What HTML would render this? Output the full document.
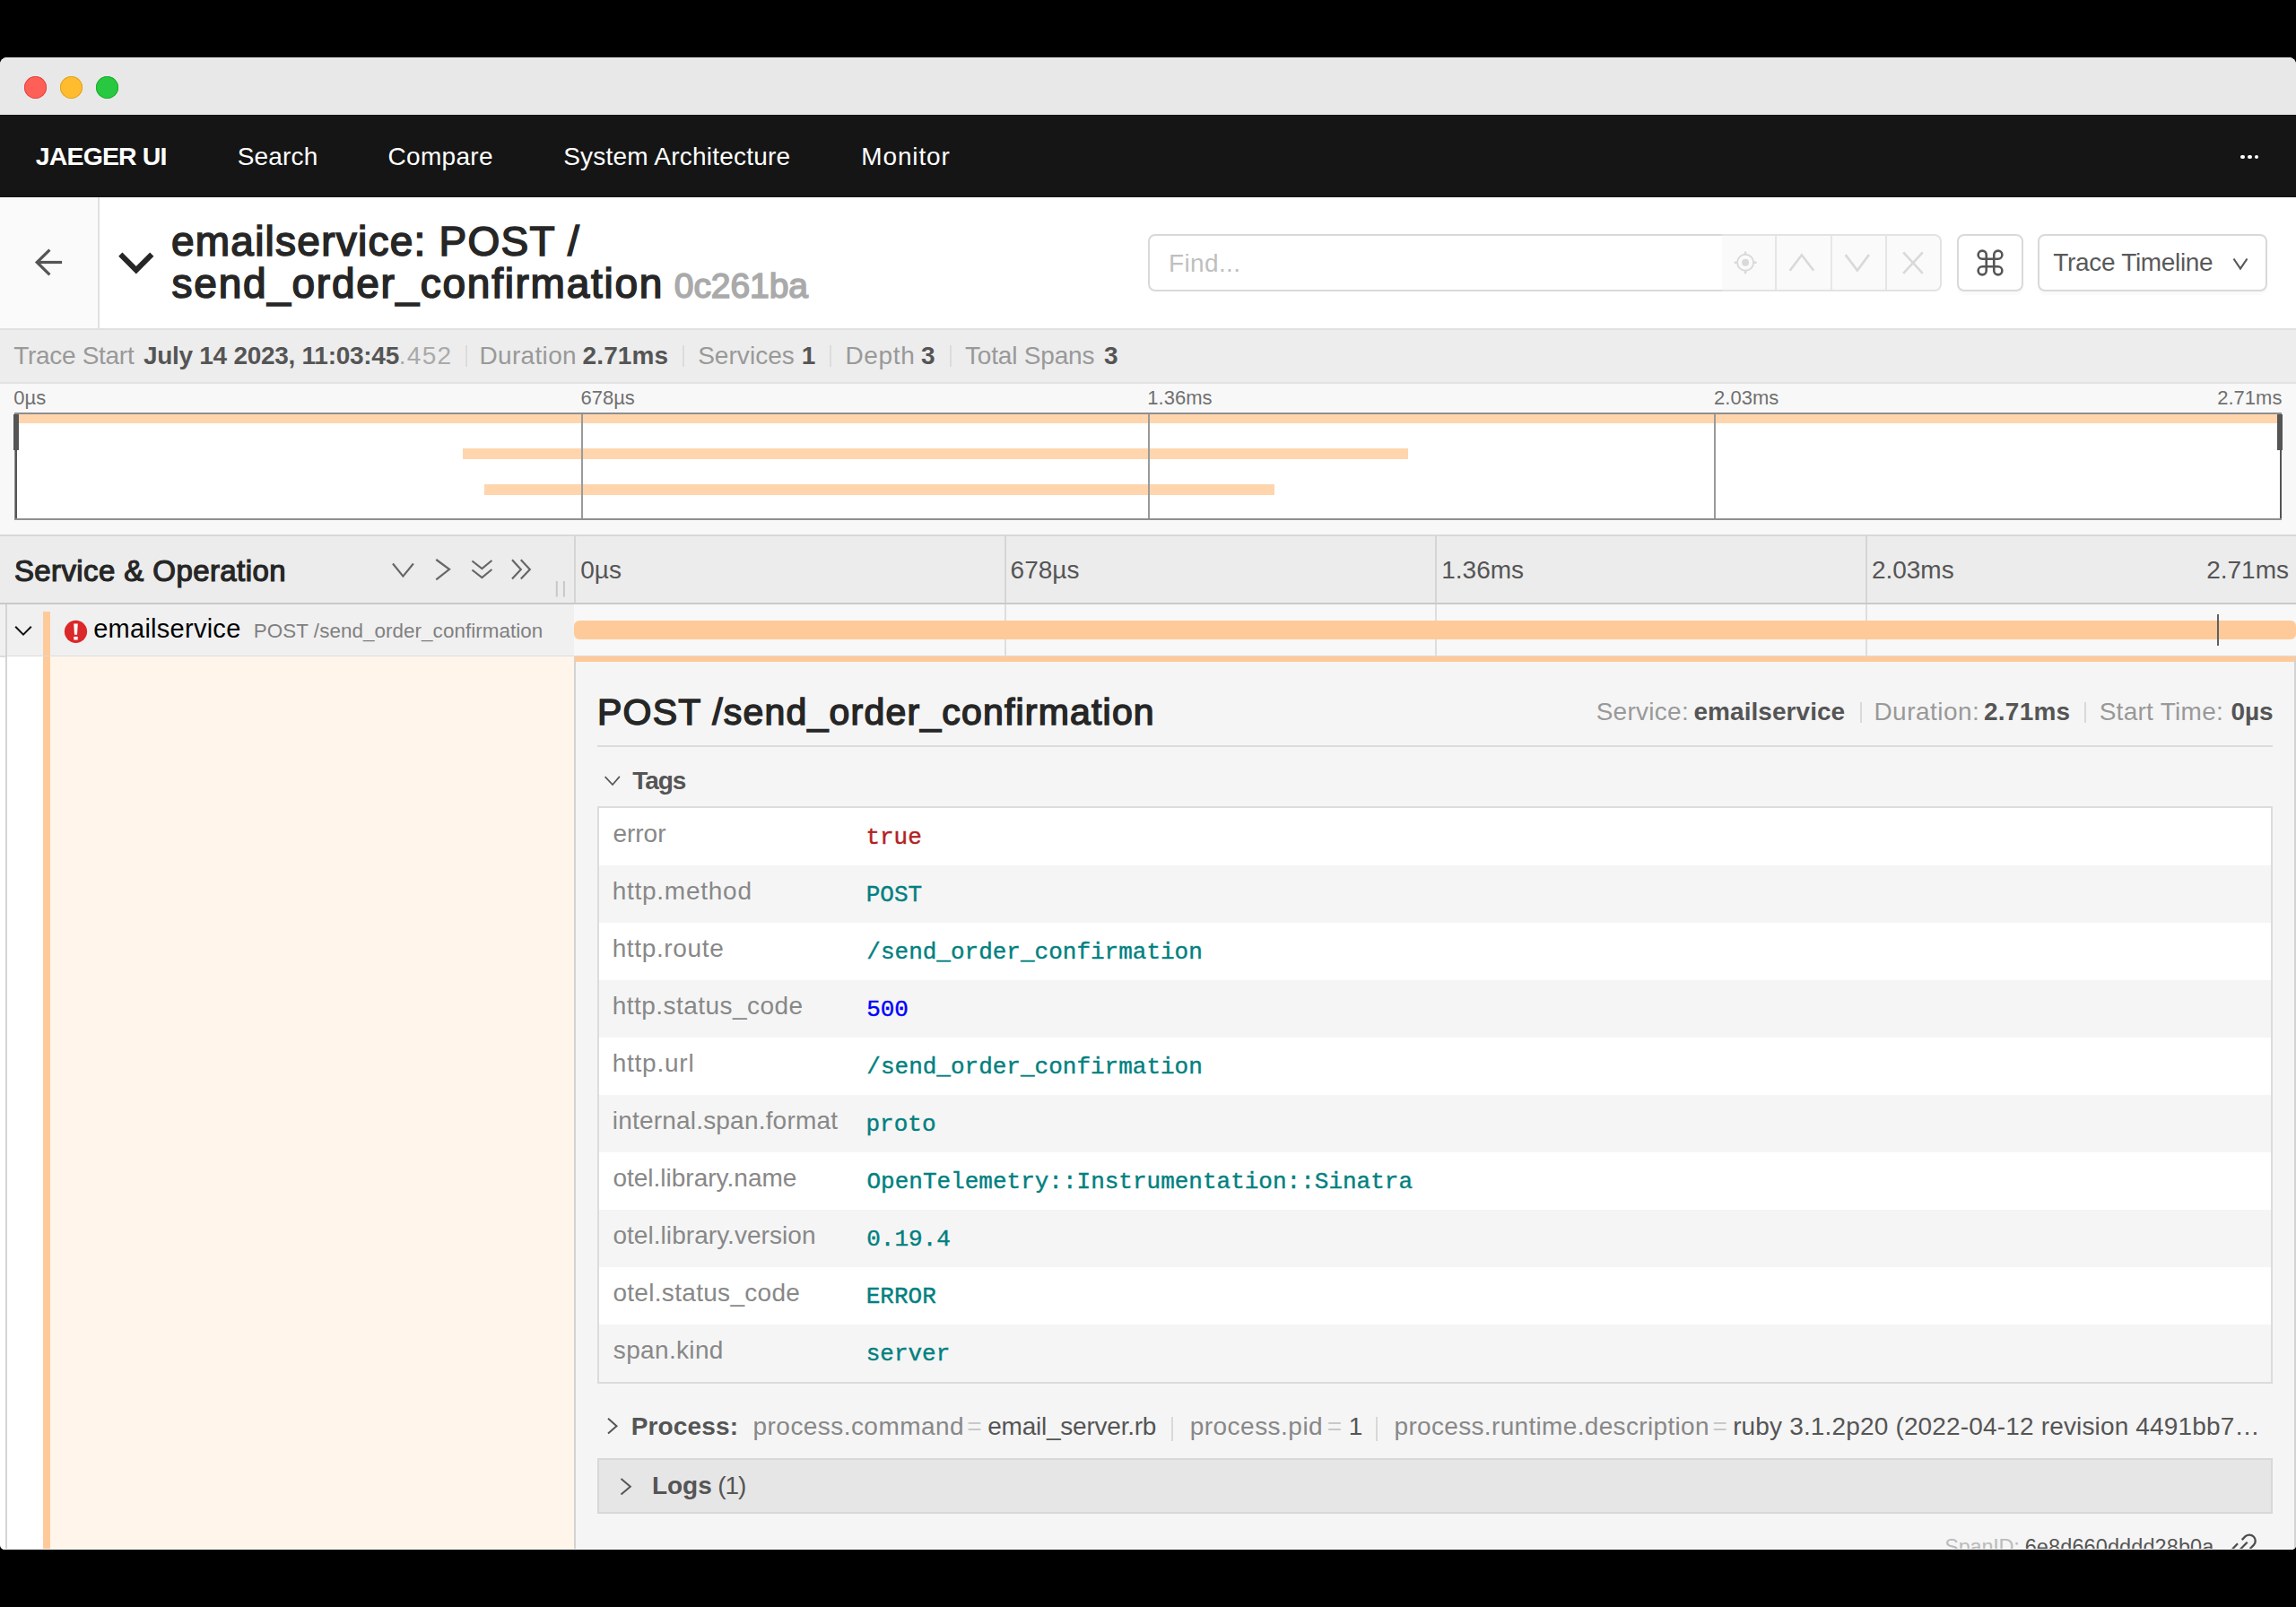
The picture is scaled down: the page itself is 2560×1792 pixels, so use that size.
<!DOCTYPE html>
<html><head><meta charset="utf-8">
<style>
*{box-sizing:border-box;margin:0;padding:0}
html,body{width:2560px;height:1792px;overflow:hidden;background:#000;font-family:"Liberation Sans",sans-serif}
.a{position:absolute}
.t{position:absolute;white-space:nowrap;line-height:1}
#win{position:absolute;left:0;top:64px;width:2560px;height:1664px;background:#fff;border-radius:8px 8px 5px 5px;overflow:hidden}
#pg{position:absolute;left:0;top:-64px;width:2560px;height:1792px}
</style></head><body>
<div id="win"><div id="pg">
<div class="a" style="left:0px;top:64px;width:2560px;height:64px;background:#e8e8e8;"></div>
<div class="a" style="left:27.1px;top:85.3px;width:25px;height:25px;border-radius:50%;background:#fe5f57;box-shadow:inset 0 0 0 1px #e14640"></div>
<div class="a" style="left:67.1px;top:85.3px;width:25px;height:25px;border-radius:50%;background:#febc2e;box-shadow:inset 0 0 0 1px #dfa123"></div>
<div class="a" style="left:107.1px;top:85.3px;width:25px;height:25px;border-radius:50%;background:#28c840;box-shadow:inset 0 0 0 1px #1aad2c"></div>
<div class="a" style="left:0px;top:128px;width:2560px;height:92px;background:#151515;"></div>
<div class="t" style="top:160.07px;font-size:28.5px;color:#fff;font-family:'Liberation Sans',sans-serif;font-weight:bold;letter-spacing:-0.86px;left:39.77px;">JAEGER UI</div>
<div class="t" style="top:160.70px;font-size:28px;color:#fff;font-family:'Liberation Sans',sans-serif;letter-spacing:0.155px;left:264.73px;">Search</div>
<div class="t" style="top:160.70px;font-size:28px;color:#fff;font-family:'Liberation Sans',sans-serif;letter-spacing:0.301px;left:432.58px;">Compare</div>
<div class="t" style="top:160.70px;font-size:28px;color:#fff;font-family:'Liberation Sans',sans-serif;letter-spacing:0.222px;left:628.13px;">System Architecture</div>
<div class="t" style="top:160.70px;font-size:28px;color:#fff;font-family:'Liberation Sans',sans-serif;letter-spacing:0.866px;left:960.30px;">Monitor</div>
<div class="a" style="left:2498.35px;top:172.75px;width:4.5px;height:4.5px;border-radius:50%;background:#fff"></div>
<div class="a" style="left:2506.15px;top:172.75px;width:4.5px;height:4.5px;border-radius:50%;background:#fff"></div>
<div class="a" style="left:2513.95px;top:172.75px;width:4.5px;height:4.5px;border-radius:50%;background:#fff"></div>
<div class="a" style="left:0px;top:220px;width:2560px;height:146px;background:#fff;"></div>
<div class="a" style="left:0px;top:220px;width:109px;height:146px;background:#fafafa;"></div>
<div class="a" style="left:109px;top:220px;width:2px;height:146px;background:#e0e0e0;"></div>
<div class="a" style="left:0px;top:366px;width:2560px;height:2px;background:#e0e0e0;"></div>
<svg class="a" style="left:0;top:220px" width="110" height="146" viewBox="0 220 110 146"><g fill="none" stroke="#555" stroke-width="3.2" stroke-linecap="butt"><path d="M55.4 278.7 L41.2 292.5 L55.4 306.3"/><path d="M41.5 292.5 H69.1"/></g></svg>
<svg class="a" style="left:120px;top:270px" width="64" height="50" viewBox="120 270 64 50"><path d="M134.3 283.7 L151.8 301.2 L169.3 283.7" fill="none" stroke="#262626" stroke-width="6"/></svg>
<div class="t" style="top:245.86px;font-size:46px;color:#262626;font-family:'Liberation Sans',sans-serif;letter-spacing:1.245px;left:190.95px;-webkit-text-stroke:1.6px #262626;">emailservice: POST /</div>
<div class="t" style="top:293.26px;font-size:46px;color:#262626;font-family:'Liberation Sans',sans-serif;letter-spacing:1.719px;left:191.62px;-webkit-text-stroke:1.6px #262626;">send_order_confirmation</div>
<div class="t" style="top:299.29px;font-size:39px;color:#aaaaaa;font-family:'Liberation Sans',sans-serif;letter-spacing:-0.069px;left:751.78px;-webkit-text-stroke:1.6px #aaaaaa;">0c261ba</div>
<div class="a" style="left:1280px;top:261px;width:642px;height:64px;background:#fff;border:2px solid #d9d9d9;border-radius:8px 0 0 8px"></div>
<div class="t" style="top:280.10px;font-size:28px;color:#bfbfbf;font-family:'Liberation Sans',sans-serif;letter-spacing:0.374px;left:1303.00px;">Find...</div>
<div class="a" style="left:1920px;top:261px;width:245px;height:64px;background:#fafafa;border:2px solid #e3e3e3;border-left:none;border-radius:0 8px 8px 0"></div>
<div class="a" style="left:1978.5px;top:263px;width:2px;height:60px;background:#e6e6e6;"></div>
<div class="a" style="left:2040.5px;top:263px;width:2px;height:60px;background:#e6e6e6;"></div>
<div class="a" style="left:2102px;top:263px;width:2px;height:60px;background:#e6e6e6;"></div>
<svg class="a" style="left:1920px;top:261px" width="245" height="64" viewBox="1920 261 245 64">
<g fill="none" stroke="#d9d9d9" stroke-width="1.9">
<circle cx="1946.1" cy="292.8" r="9"/>
</g>
<path d="M1946.1 280.4 V284 M1946.1 301.6 V305.2 M1933.7 292.8 H1937.3 M1954.9 292.8 H1958.5" stroke="#d9d9d9" stroke-width="2.5"/>
<circle cx="1946.1" cy="292.8" r="4" fill="#d9d9d9"/>
<g fill="none" stroke="#d9d9d9" stroke-width="2.6">
<path d="M1995.7 301.8 L2008.9 284.3 L2022.2 301.8"/>
<path d="M2057.7 284.1 L2070.9 301.6 L2083.9 284.1"/>
<path d="M2122.2 281.4 L2143.8 304.8 M2143.8 281.4 L2122.2 304.8"/>
</g></svg>
<div class="a" style="left:2182px;top:261px;width:74px;height:64px;background:#fff;border:2px solid #d9d9d9;border-radius:8px;box-shadow:0 4px 0 rgba(0,0,0,0.015)"></div>
<svg class="a" style="left:2190px;top:265px" width="60" height="56" viewBox="2190 265 60 56"><path d="M2214.75 284.2 V301.8 M2223.25 284.2 V301.8 M2210.2 288.75 H2227.8 M2210.2 297.25 H2227.8 M2214.75 284.2 A4.55 4.55 0 1 0 2210.2 288.75 M2223.25 284.2 A4.55 4.55 0 1 1 2227.8 288.75 M2214.75 301.8 A4.55 4.55 0 1 1 2210.2 297.25 M2223.25 301.8 A4.55 4.55 0 1 0 2227.8 297.25" fill="none" stroke="#555" stroke-width="2.6"/></svg>
<div class="a" style="left:2272px;top:261px;width:256px;height:64px;background:#fff;border:2px solid #d9d9d9;border-radius:8px;box-shadow:0 4px 0 rgba(0,0,0,0.015)"></div>
<div class="t" style="top:279.30px;font-size:28px;color:#595959;font-family:'Liberation Sans',sans-serif;letter-spacing:-0.33px;left:2289.37px;">Trace Timeline</div>
<svg class="a" style="left:2480px;top:280px" width="40" height="30" viewBox="2480 280 40 30"><path d="M2490.5 288.5 L2498 299.5 L2505.5 288.5" fill="none" stroke="#595959" stroke-width="2.2"/></svg>
<div class="a" style="left:0px;top:368px;width:2560px;height:58px;background:#ededed;"></div>
<div class="a" style="left:0px;top:426px;width:2560px;height:2px;background:#e3e3e3;"></div>
<div class="t" style="top:383.10px;font-size:28px;color:#999;font-family:'Liberation Sans',sans-serif;letter-spacing:-0.305px;left:15.27px;">Trace Start</div>
<div class="t" style="top:383.10px;font-size:28px;color:#555;font-family:'Liberation Sans',sans-serif;font-weight:bold;letter-spacing:-0.274px;left:159.88px;">July 14 2023, 11:03:45</div>
<div class="t" style="top:383.10px;font-size:28px;color:#aaa;font-family:'Liberation Sans',sans-serif;letter-spacing:1.256px;left:444.84px;">.452</div>
<div class="t" style="top:383.10px;font-size:28px;color:#999;font-family:'Liberation Sans',sans-serif;letter-spacing:0.326px;left:534.50px;">Duration</div>
<div class="t" style="top:383.10px;font-size:28px;color:#555;font-family:'Liberation Sans',sans-serif;font-weight:bold;letter-spacing:0.131px;left:649.53px;">2.71ms</div>
<div class="t" style="top:383.10px;font-size:28px;color:#999;font-family:'Liberation Sans',sans-serif;letter-spacing:0.045px;left:778.13px;">Services</div>
<div class="t" style="top:383.10px;font-size:28px;color:#555;font-family:'Liberation Sans',sans-serif;font-weight:bold;left:893.64px;">1</div>
<div class="t" style="top:383.10px;font-size:28px;color:#999;font-family:'Liberation Sans',sans-serif;letter-spacing:0.675px;left:942.40px;">Depth</div>
<div class="t" style="top:383.10px;font-size:28px;color:#555;font-family:'Liberation Sans',sans-serif;font-weight:bold;left:1026.96px;">3</div>
<div class="t" style="top:383.10px;font-size:28px;color:#999;font-family:'Liberation Sans',sans-serif;letter-spacing:-0.188px;left:1075.97px;">Total Spans</div>
<div class="t" style="top:383.10px;font-size:28px;color:#555;font-family:'Liberation Sans',sans-serif;font-weight:bold;left:1230.96px;">3</div>
<div class="a" style="left:518.5px;top:385px;width:2px;height:24px;background:#dcdcdc;"></div>
<div class="a" style="left:761px;top:385px;width:2px;height:24px;background:#dcdcdc;"></div>
<div class="a" style="left:925px;top:385px;width:2px;height:24px;background:#dcdcdc;"></div>
<div class="a" style="left:1059px;top:385px;width:2px;height:24px;background:#dcdcdc;"></div>
<div class="a" style="left:0px;top:428px;width:2560px;height:168px;background:#f8f8f8;"></div>
<div class="a" style="left:0px;top:596px;width:2560px;height:2px;background:#d8d8d8;"></div>
<div class="t" style="top:433.38px;font-size:22px;color:#707070;font-family:'Liberation Sans',sans-serif;left:15.34px;">0µs</div>
<div class="t" style="top:433.38px;font-size:22px;color:#707070;font-family:'Liberation Sans',sans-serif;left:647.48px;">678µs</div>
<div class="t" style="top:433.38px;font-size:22px;color:#707070;font-family:'Liberation Sans',sans-serif;left:1279.32px;">1.36ms</div>
<div class="t" style="top:433.38px;font-size:22px;color:#707070;font-family:'Liberation Sans',sans-serif;left:1911.09px;">2.03ms</div>
<div class="t" style="top:433.38px;font-size:22px;color:#707070;font-family:'Liberation Sans',sans-serif;right:15.61px;">2.71ms</div>
<div class="a" style="left:16px;top:460px;width:2528px;height:120px;background:#fff;border:2px solid #8f8f8f"></div>
<div class="a" style="left:18px;top:462px;width:2524px;height:10px;background:#ffd5ad;"></div>
<div class="a" style="left:515.5px;top:500px;width:1054.5px;height:12px;background:#ffd5ad;"></div>
<div class="a" style="left:540px;top:540px;width:881px;height:12px;background:#ffd5ad;"></div>
<div class="a" style="left:648px;top:462px;width:2px;height:116px;background:#9a9a9a;"></div>
<div class="a" style="left:1279.5px;top:462px;width:2px;height:116px;background:#9a9a9a;"></div>
<div class="a" style="left:1911px;top:462px;width:2px;height:116px;background:#9a9a9a;"></div>
<div class="a" style="left:15px;top:462px;width:6px;height:40px;background:#555;"></div>
<div class="a" style="left:16.5px;top:502px;width:2px;height:76px;background:#555;"></div>
<div class="a" style="left:2539px;top:462px;width:6px;height:40px;background:#555;"></div>
<div class="a" style="left:2542px;top:502px;width:2px;height:76px;background:#555;"></div>
<div class="a" style="left:0px;top:598px;width:2560px;height:74px;background:#ececec;"></div>
<div class="a" style="left:0px;top:672px;width:2560px;height:2px;background:#c9c9c9;"></div>
<div class="t" style="top:619.57px;font-size:33px;color:#262626;font-family:'Liberation Sans',sans-serif;letter-spacing:0.407px;left:15.90px;-webkit-text-stroke:1.2px #262626;">Service &amp; Operation</div>
<svg class="a" style="left:420px;top:610px" width="220" height="62" viewBox="420 610 220 62">
<g fill="none" stroke="#666" stroke-width="2.2">
<path d="M438 628.5 L449.4 642.6 L460.9 628.5"/>
<path d="M486.3 624 L501 634.8 L486.3 646.3"/>
<path d="M526.4 625.5 L537.4 634 L548.4 625 M526.4 635.5 L537.4 644 L548.4 635"/>
<path d="M571 624.2 L580.8 635 L571 645.6 M580.8 624.2 L590.8 635 L580.8 645.6"/>
</g>
<path d="M620.8 648 V665.6 M628.9 648 V665.6" stroke="#c8c8c8" stroke-width="2"/>
</svg>
<div class="a" style="left:640px;top:598px;width:2px;height:74px;background:#d5d5d5;"></div>
<div class="a" style="left:1120px;top:598px;width:2px;height:74px;background:#d5d5d5;"></div>
<div class="a" style="left:1600px;top:598px;width:2px;height:74px;background:#d5d5d5;"></div>
<div class="a" style="left:2080px;top:598px;width:2px;height:74px;background:#d5d5d5;"></div>
<div class="t" style="top:622.30px;font-size:28px;color:#555;font-family:'Liberation Sans',sans-serif;left:647.21px;">0µs</div>
<div class="t" style="top:622.30px;font-size:28px;color:#555;font-family:'Liberation Sans',sans-serif;left:1126.58px;">678µs</div>
<div class="t" style="top:622.30px;font-size:28px;color:#555;font-family:'Liberation Sans',sans-serif;left:1607.27px;">1.36ms</div>
<div class="t" style="top:622.30px;font-size:28px;color:#555;font-family:'Liberation Sans',sans-serif;left:2086.89px;">2.03ms</div>
<div class="t" style="top:622.30px;font-size:28px;color:#555;font-family:'Liberation Sans',sans-serif;right:7.99px;">2.71ms</div>
<div class="a" style="left:0px;top:674px;width:640px;height:57px;background:#f0f0f0;"></div>
<div class="a" style="left:640px;top:674px;width:1920px;height:57px;background:#f8f8f8;"></div>
<div class="a" style="left:1120px;top:674px;width:2px;height:57px;background:#dedede;"></div>
<div class="a" style="left:1600px;top:674px;width:2px;height:57px;background:#dedede;"></div>
<div class="a" style="left:2080px;top:674px;width:2px;height:57px;background:#dedede;"></div>
<div class="a" style="left:0px;top:731px;width:640px;height:1.5px;background:#dcdcdc;"></div>
<div class="a" style="left:640px;top:731px;width:1920px;height:1.5px;background:#dcdcdc;"></div>
<svg class="a" style="left:10px;top:690px" width="30" height="26" viewBox="10 690 30 26"><path d="M17.2 698.8 L26 707.6 L34.8 698.8" fill="none" stroke="#111" stroke-width="2"/></svg>
<div class="a" style="left:48px;top:682px;width:8px;height:49px;background:#ffca99;"></div>
<svg class="a" style="left:70px;top:690px" width="30" height="30" viewBox="70 690 30 30">
<circle cx="84.5" cy="704.3" r="12.6" fill="#db2828"/>
<path d="M82.2 695.6 H86.8 L86 707.8 H83 Z" fill="#fff"/>
<rect x="82.3" y="709.9" width="4.4" height="3.6" fill="#fff"/>
</svg>
<div class="t" style="top:687.45px;font-size:29px;color:#000;font-family:'Liberation Sans',sans-serif;letter-spacing:0.269px;left:104.17px;">emailservice</div>
<div class="t" style="top:693.04px;font-size:22.4px;color:#808080;font-family:'Liberation Sans',sans-serif;letter-spacing:0.067px;left:282.76px;">POST /send_order_confirmation</div>
<div class="a" style="left:640px;top:692px;width:1920px;height:21px;background:#ffca99;border-radius:6px"></div>
<div class="a" style="left:2472.2px;top:685px;width:2px;height:35px;background:#606060;"></div>
<div class="a" style="left:8px;top:732px;width:40px;height:1000px;background:#fff;"></div>
<div class="a" style="left:56px;top:732px;width:584px;height:1000px;background:#fff5eb;"></div>
<div class="a" style="left:48px;top:732px;width:8px;height:1000px;background:#ffca99;"></div>
<div class="a" style="left:6px;top:674px;width:2px;height:1100px;background:#d5d5d5;"></div>
<div class="a" style="left:640px;top:732px;width:1920px;height:1100px;background:#f5f5f5;border-left:2px solid #d3d3d3;border-right:2px solid #d3d3d3;border-top:6px solid #ffca99"></div>
<div class="t" style="top:773.59px;font-size:41px;color:#262626;font-family:'Liberation Sans',sans-serif;letter-spacing:1.194px;left:666.04px;-webkit-text-stroke:1.5px #262626;">POST /send_order_confirmation</div>
<div class="t" style="top:779.80px;font-size:28px;color:#999;font-family:'Liberation Sans',sans-serif;letter-spacing:0.283px;left:1779.63px;">Service:</div>
<div class="t" style="top:779.80px;font-size:28px;color:#555;font-family:'Liberation Sans',sans-serif;font-weight:bold;letter-spacing:0.047px;left:1888.51px;">emailservice</div>
<div class="a" style="left:2073.5px;top:783px;width:2px;height:23px;background:#d9d9d9;"></div>
<div class="t" style="top:779.80px;font-size:28px;color:#999;font-family:'Liberation Sans',sans-serif;letter-spacing:0.48px;left:2089.40px;">Duration:</div>
<div class="t" style="top:779.80px;font-size:28px;color:#555;font-family:'Liberation Sans',sans-serif;font-weight:bold;letter-spacing:0.231px;left:2212.03px;">2.71ms</div>
<div class="a" style="left:2323.5px;top:783px;width:2px;height:23px;background:#d9d9d9;"></div>
<div class="t" style="top:779.80px;font-size:28px;color:#999;font-family:'Liberation Sans',sans-serif;letter-spacing:0.282px;left:2340.63px;">Start Time:</div>
<div class="t" style="top:779.80px;font-size:28px;color:#555;font-family:'Liberation Sans',sans-serif;font-weight:bold;right:25.35px;">0µs</div>
<div class="a" style="left:666px;top:831px;width:1868px;height:2px;background:#dcdcdc;"></div>
<svg class="a" style="left:666px;top:856px" width="36" height="30" viewBox="666 856 36 30"><path d="M674.6 866.2 L683 875 L690.9 865.9" fill="none" stroke="#555" stroke-width="1.7"/></svg>
<div class="t" style="top:857.30px;font-size:28px;color:#555;font-family:'Liberation Sans',sans-serif;font-weight:bold;letter-spacing:-1.063px;left:705.29px;">Tags</div>
<div class="a" style="left:666px;top:899px;width:1868px;height:644px;background:#fff;border:2px solid #dcdcdc"></div>
<div class="t" style="top:916.30px;font-size:28px;color:#888;font-family:'Liberation Sans',sans-serif;letter-spacing:-0.016px;left:683.41px;">error</div>
<div class="t" style="top:920.57px;font-size:26px;color:#b22222;font-family:'Liberation Mono',monospace;left:965.39px;-webkit-text-stroke:0.4px #b22222;">true</div>
<div class="a" style="left:668px;top:965px;width:1864px;height:64px;background:#f5f5f5;"></div>
<div class="t" style="top:980.30px;font-size:28px;color:#888;font-family:'Liberation Sans',sans-serif;letter-spacing:0.747px;left:682.66px;">http.method</div>
<div class="t" style="top:984.57px;font-size:26px;color:#008080;font-family:'Liberation Mono',monospace;left:965.74px;-webkit-text-stroke:0.4px #008080;">POST</div>
<div class="t" style="top:1044.30px;font-size:28px;color:#888;font-family:'Liberation Sans',sans-serif;letter-spacing:0.643px;left:682.66px;">http.route</div>
<div class="t" style="top:1048.57px;font-size:26px;color:#008080;font-family:'Liberation Mono',monospace;left:966.35px;-webkit-text-stroke:0.4px #008080;">/send_order_confirmation</div>
<div class="a" style="left:668px;top:1093px;width:1864px;height:64px;background:#f5f5f5;"></div>
<div class="t" style="top:1108.30px;font-size:28px;color:#888;font-family:'Liberation Sans',sans-serif;letter-spacing:0.467px;left:682.66px;">http.status_code</div>
<div class="t" style="top:1112.57px;font-size:26px;color:#0000ff;font-family:'Liberation Mono',monospace;left:966.17px;-webkit-text-stroke:0.4px #0000ff;">500</div>
<div class="t" style="top:1172.30px;font-size:28px;color:#888;font-family:'Liberation Sans',sans-serif;letter-spacing:0.774px;left:682.66px;">http.url</div>
<div class="t" style="top:1176.57px;font-size:26px;color:#008080;font-family:'Liberation Mono',monospace;left:966.35px;-webkit-text-stroke:0.4px #008080;">/send_order_confirmation</div>
<div class="a" style="left:668px;top:1221px;width:1864px;height:64px;background:#f5f5f5;"></div>
<div class="t" style="top:1236.30px;font-size:28px;color:#888;font-family:'Liberation Sans',sans-serif;letter-spacing:0.201px;left:682.73px;">internal.span.format</div>
<div class="t" style="top:1240.57px;font-size:26px;color:#008080;font-family:'Liberation Mono',monospace;left:965.53px;-webkit-text-stroke:0.4px #008080;">proto</div>
<div class="t" style="top:1300.30px;font-size:28px;color:#888;font-family:'Liberation Sans',sans-serif;letter-spacing:0.003px;left:683.42px;">otel.library.name</div>
<div class="t" style="top:1304.57px;font-size:26px;color:#008080;font-family:'Liberation Mono',monospace;left:966.51px;-webkit-text-stroke:0.4px #008080;">OpenTelemetry::Instrumentation::Sinatra</div>
<div class="a" style="left:668px;top:1349px;width:1864px;height:64px;background:#f5f5f5;"></div>
<div class="t" style="top:1364.30px;font-size:28px;color:#888;font-family:'Liberation Sans',sans-serif;letter-spacing:0.052px;left:683.42px;">otel.library.version</div>
<div class="t" style="top:1368.57px;font-size:26px;color:#008080;font-family:'Liberation Mono',monospace;left:966.23px;-webkit-text-stroke:0.4px #008080;">0.19.4</div>
<div class="t" style="top:1428.30px;font-size:28px;color:#888;font-family:'Liberation Sans',sans-serif;letter-spacing:0.307px;left:683.42px;">otel.status_code</div>
<div class="t" style="top:1432.57px;font-size:26px;color:#008080;font-family:'Liberation Mono',monospace;left:965.74px;-webkit-text-stroke:0.4px #008080;">ERROR</div>
<div class="a" style="left:668px;top:1477px;width:1864px;height:64px;background:#f5f5f5;"></div>
<div class="t" style="top:1492.30px;font-size:28px;color:#888;font-family:'Liberation Sans',sans-serif;letter-spacing:0.34px;left:683.82px;">span.kind</div>
<div class="t" style="top:1496.57px;font-size:26px;color:#008080;font-family:'Liberation Mono',monospace;left:965.68px;-webkit-text-stroke:0.4px #008080;">server</div>
<svg class="a" style="left:670px;top:1576px" width="26" height="30" viewBox="670 1576 26 30"><path d="M678 1581.8 L687.5 1590.2 L678 1598.6" fill="none" stroke="#555" stroke-width="2"/></svg>
<div class="t" style="top:1576.50px;font-size:28px;color:#555;font-family:'Liberation Sans',sans-serif;font-weight:bold;letter-spacing:0.182px;left:703.63px;">Process:</div>
<div class="t" style="top:1576.50px;font-size:28px;color:#888;font-family:'Liberation Sans',sans-serif;letter-spacing:0.439px;left:839.60px;">process.command</div>
<div class="t" style="top:1576.50px;font-size:28px;color:#c8c8c8;font-family:'Liberation Sans',sans-serif;left:1078.33px;">=</div>
<div class="t" style="top:1576.50px;font-size:28px;color:#555;font-family:'Liberation Sans',sans-serif;letter-spacing:-0.228px;left:1101.21px;">email_server.rb</div>
<div class="a" style="left:1305.5px;top:1580px;width:2px;height:27px;background:#d9d9d9;"></div>
<div class="t" style="top:1576.50px;font-size:28px;color:#888;font-family:'Liberation Sans',sans-serif;letter-spacing:0.482px;left:1326.70px;">process.pid</div>
<div class="t" style="top:1576.50px;font-size:28px;color:#c8c8c8;font-family:'Liberation Sans',sans-serif;left:1479.63px;">=</div>
<div class="t" style="top:1576.50px;font-size:28px;color:#555;font-family:'Liberation Sans',sans-serif;left:1503.67px;">1</div>
<div class="a" style="left:1534px;top:1580px;width:2px;height:27px;background:#d9d9d9;"></div>
<div class="t" style="top:1576.50px;font-size:28px;color:#888;font-family:'Liberation Sans',sans-serif;letter-spacing:0.333px;left:1554.50px;">process.runtime.description</div>
<div class="t" style="top:1576.50px;font-size:28px;color:#c8c8c8;font-family:'Liberation Sans',sans-serif;left:1909.53px;">=</div>
<div class="t" style="top:1576.50px;font-size:28px;color:#555;font-family:'Liberation Sans',sans-serif;letter-spacing:0.161px;left:1932.14px;">ruby 3.1.2p20 (2022-04-12 revision 4491bb7…</div>
<div class="a" style="left:666px;top:1626px;width:1868px;height:62px;background:#e6e6e6;border:2px solid #d8d8d8"></div>
<svg class="a" style="left:686px;top:1644px" width="24" height="28" viewBox="686 1644 24 28"><path d="M692.5 1649 L702.8 1657.7 L692.5 1666.4" fill="none" stroke="#555" stroke-width="2"/></svg>
<div class="t" style="top:1643.30px;font-size:28px;color:#555;font-family:'Liberation Sans',sans-serif;font-weight:bold;letter-spacing:-0.02px;left:726.93px;">Logs</div>
<div class="t" style="top:1643.30px;font-size:28px;color:#555;font-family:'Liberation Sans',sans-serif;letter-spacing:-1.074px;left:800.26px;">(1)</div>
<div class="t" style="top:1714.41px;font-size:23.5px;color:#bbb;font-family:'Liberation Sans',sans-serif;letter-spacing:-0.217px;left:2168.23px;">SpanID:</div>
<div class="t" style="top:1714.41px;font-size:23.5px;color:#555;font-family:'Liberation Sans',sans-serif;letter-spacing:0.099px;left:2257.71px;">6e8d660dddd28b0a</div>
<svg class="a" style="left:2480px;top:1700px" width="50" height="28" viewBox="2480 1700 50 28"><g fill="none" stroke="#4d4d4d" stroke-width="2.3" stroke-linecap="butt"><path d="M2499.7 1717.1 L2503.6 1713.2 A6.7 6.7 0 0 1 2513.1 1722.6 L2508.7 1727"/><path d="M2505.7 1719.8 L2497.5 1728"/><path d="M2495 1721.3 L2489 1727.5"/></g></svg>
<div class="a" style="left:0px;top:1727px;width:2560px;height:1px;background:#ffffff;"></div>
</div></div>
</body></html>
